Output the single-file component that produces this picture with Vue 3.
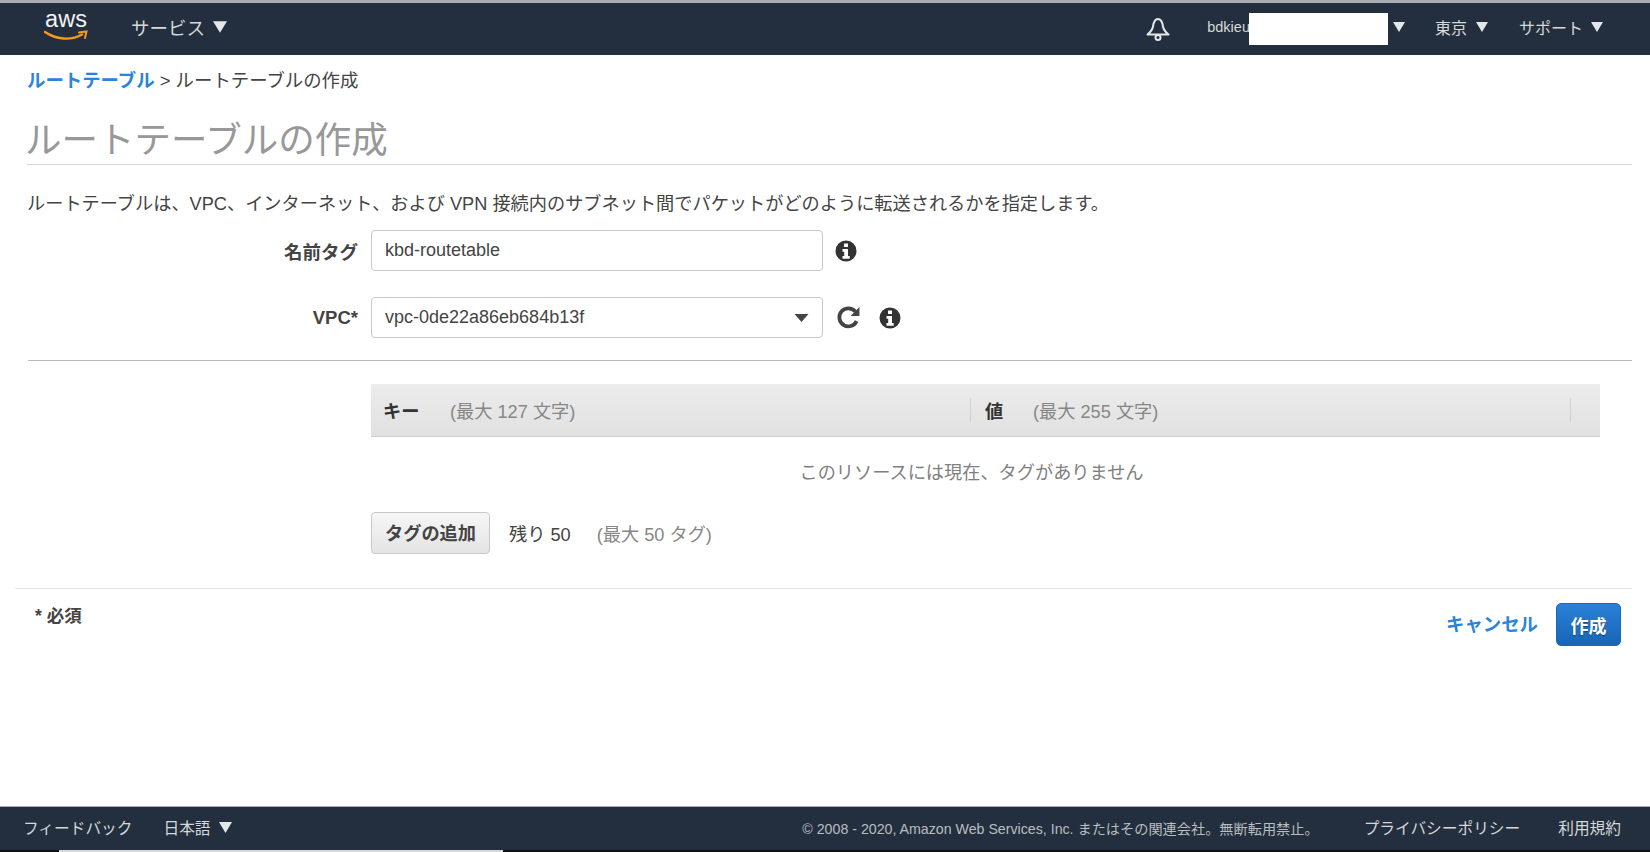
<script setup>
const caret = 'M0 0H12L6 10Z'
</script>

<template>
  <div class="page">
    <header class="topbar">
      <div class="brand">
        <svg class="logo" viewBox="0 0 46 30" width="46" height="30">
          <text x="22" y="13" text-anchor="middle" class="logo-text">aws</text>
          <path d="M1 18C12 25.500 27 27 38 20.500" fill="none" stroke="#f59a1c" stroke-width="2.400" stroke-linecap="round" />
          <path d="M35 18.500L42.500 17.500L41 24" fill="none" stroke="#f59a1c" stroke-width="2" stroke-linecap="round" />
        </svg>
      </div>
      <div class="nav-item services">サービス
        <svg class="caret" viewBox="0 0 12 10" width="14" height="12"><path :d="caret" /></svg>
      </div>
      <div class="spacer"></div>
      <svg class="bell" viewBox="0 0 24 24" width="24" height="24" fill="none" stroke="#e4e7e9" stroke-width="2" stroke-linejoin="round">
        <path d="M12 2C8.500 2 7.500 6 7 9.500C6.500 13 4.500 15 1.500 17.500H22.500C19.500 15 17.500 13 17 9.500C16.500 6 15.500 2 12 2Z" />
        <circle cx="12" cy="20.500" r="2.500" />
      </svg>
      <div class="nav-item account">
        <span class="user">bdkieu</span><span class="redact"></span>
        <svg class="caret" viewBox="0 0 12 10" width="12" height="10"><path :d="caret" /></svg>
      </div>
      <div class="nav-item region">東京
        <svg class="caret" viewBox="0 0 12 10" width="12" height="10"><path :d="caret" /></svg>
      </div>
      <div class="nav-item support">サポート
        <svg class="caret" viewBox="0 0 12 10" width="12" height="10"><path :d="caret" /></svg>
      </div>
    </header>

    <main class="main">
      <div class="content">
        <nav class="crumbs"><a class="crumb-link">ルートテーブル</a> &gt; ルートテーブルの作成</nav>
        <h1 class="title">ルートテーブルの作成</h1>
        <p class="desc">ルートテーブルは、VPC、インターネット、および VPN 接続内のサブネット間でパケットがどのように転送されるかを指定します。</p>

        <div class="form-row name-row">
          <label class="label">名前タグ</label>
          <div class="field">kbd-routetable</div>
          <svg class="info" viewBox="0 0 22 22" width="22" height="22">
            <path fill-rule="evenodd" d="M11 .5a10.500 10.500 0 1 0 0 21 10.500 10.500 0 0 0 0-21ZM9 3.500h4v3.500H9ZM7.500 9h5.500v7h1.700v2.800H7.500V16h1.700v-4.200H7.500Z" />
          </svg>
        </div>

        <div class="form-row vpc-row">
          <label class="label">VPC*</label>
          <div class="field select">
            <span>vpc-0de22a86eb684b13f</span>
            <svg viewBox="0 0 14 8" width="15" height="8"><path d="M0 0H14L7 8Z" fill="#444" /></svg>
          </div>
          <svg class="refresh" viewBox="0 0 24 24" width="25" height="25">
            <path fill="none" stroke="#444" stroke-width="3.600" d="M19.800 15.500A8.700 8.700 0 1 1 18.600 6.300" />
            <path fill="#444" d="M22.500 2V10.500H14Z" />
          </svg>
          <svg class="info vpc-info" viewBox="0 0 22 22" width="22" height="22">
            <path fill-rule="evenodd" d="M11 .5a10.500 10.500 0 1 0 0 21 10.500 10.500 0 0 0 0-21ZM9 3.500h4v3.500H9ZM7.500 9h5.500v7h1.700v2.800H7.500V16h1.700v-4.200H7.500Z" />
          </svg>
        </div>

        <hr class="divider" />

        <section class="tags">
          <div class="tag-head">
            <div class="col key-col"><b>キー</b><span class="hint">(最大 127 文字)</span></div>
            <div class="col val-col"><b>値</b><span class="hint">(最大 255 文字)</span></div>
            <div class="col end-col"></div>
          </div>
          <div class="empty">このリソースには現在、タグがありません</div>
          <div class="tag-actions">
            <button class="add-btn">タグの追加</button>
            <span class="remain">残り 50</span>
            <span class="hint max">(最大 50 タグ)</span>
          </div>
        </section>
      </div>

      <div class="form-foot">
        <div class="required">* 必須</div>
        <div class="actions">
          <a class="cancel">キャンセル</a>
          <button class="create">作成</button>
        </div>
      </div>
    </main>

    <footer class="footer">
      <div class="foot-bar">
        <span class="feedback">フィードバック</span>
        <span class="lang">日本語
          <svg class="caret" viewBox="0 0 12 10" width="13" height="11"><path :d="caret" /></svg>
        </span>
        <span class="spacer"></span>
        <span class="copy">© 2008 - 2020, Amazon Web Services, Inc. またはその関連会社。無断転用禁止。</span>
        <span class="policy">プライバシーポリシー</span>
        <span class="terms">利用規約</span>
      </div>
      <div class="scroll"><div class="thumb"></div></div>
    </footer>
  </div>
</template>

<style>
html, body { margin: 0; background: #fff; overflow: hidden; }
</style>

<style scoped>
.page {
  height: 852px;
  display: flex;
  flex-direction: column;
  font-family: "Liberation Sans", "Noto Sans CJK JP", sans-serif;
  color: #444;
  background: #fff;
}
.topbar {
  height: 52px;
  flex: none;
  border-top: 3px solid #a9acb0;
  background: #232f3e;
  display: flex;
  align-items: center;
  color: #d5d8da;
  box-sizing: content-box;
}
.brand { width: 131px; padding-left: 44px; box-sizing: border-box; display: flex; }
.logo-text { font: 23.500px "Liberation Sans", sans-serif; fill: #f2f3f3; }
.nav-item { display: flex; align-items: center; white-space: nowrap; padding-bottom: 4px; }
.services { font-size: 18.500px; gap: 8px; }
.caret { fill: #e4e7e9; flex: none; }
.spacer { flex: 1; }
.bell { margin-right: 37px; }
.account { font-size: 14.500px; }
.redact { width: 139px; height: 32px; background: #fff; margin-left: -1px; margin-top: 4px; }
.account .caret { margin-left: 5px; }
.region { font-size: 16px; gap: 9px; margin-left: 30px; }
.support { font-size: 16px; gap: 8px; margin-left: 31px; margin-right: 47px; }

.main { flex: 1; display: flex; flex-direction: column; }
.content { padding: 0 18px 0 27px; }
.crumbs { font-size: 18.400px; line-height: 26px; padding-top: 13px; white-space: nowrap; }
.crumb-link { color: #2b84dc; font-weight: 700; }
.title {
  margin: 23px 0 0;
  font-size: 36.500px;
  font-weight: 400;
  line-height: 48px;
  height: 47px;
  color: #989898;
  border-bottom: 1px solid #d5d5d5;
  text-indent: -2px;
}
.desc { margin: 26px 0 0; font-size: 18.200px; line-height: 26px; white-space: nowrap; }
.form-row { display: flex; align-items: center; }
.name-row { margin-top: 13px; }
.vpc-row { margin-top: 26px; }
.label { width: 331px; text-align: right; font-size: 18.500px; font-weight: 700; margin-right: 13px; }
.field {
  width: 452px;
  height: 41px;
  box-sizing: border-box;
  border: 1px solid #c9c9c9;
  border-radius: 4px;
  padding: 0 13px;
  display: flex;
  align-items: center;
  justify-content: space-between;
  font-size: 18px;
}
.info { fill: #333; margin-left: 12px; flex: none; }
.refresh { margin-left: 13px; flex: none; }
.vpc-info { margin-left: 18px; }
.divider { margin: 22px 0 0 1px; border: 0; border-top: 1px solid #b8b8b8; }
.tags { margin: 23px 0 0 344px; width: 1229px; }
.tag-head {
  height: 53px;
  box-sizing: border-box;
  background: linear-gradient(#ececec, #e1e1e1);
  border-bottom: 1px solid #cfcfcf;
  display: flex;
  align-items: center;
  font-size: 18.200px;
}
.col { height: 24px; display: flex; align-items: center; }
.col b { color: #333; flex: none; }
.key-col { width: 599px; padding-left: 12px; box-sizing: border-box; }
.key-col b { width: 67px; }
.val-col { width: 601px; padding-left: 14px; box-sizing: border-box; border-left: 1px solid #d0d0d0; border-right: 1px solid #d0d0d0; }
.val-col b { width: 48px; }
.hint { color: #878787; }
.empty { text-align: center; color: #808080; font-size: 18.200px; line-height: 26px; margin-top: 23px; padding-right: 28px; }
.tag-actions { display: flex; align-items: center; margin-top: 26px; font-size: 18.200px; }
.add-btn {
  width: 119px;
  height: 42px;
  border: 1px solid #c8c8c8;
  border-radius: 4px;
  background: linear-gradient(#f6f6f6, #e4e4e4);
  font: 700 18.200px "Liberation Sans", "Noto Sans CJK JP", sans-serif;
  color: #444;
  padding: 0 0 2px;
}
.remain { margin-left: 19px; }
.max { margin-left: 26px; }
.form-foot {
  margin: 34px 18px 0 15px;
  border-top: 1px solid #e4e4e4;
  display: flex;
  justify-content: space-between;
  padding: 14px 11px 0 20px;
}
.required { font-size: 17.500px; font-weight: 700; line-height: 26px; color: #444; }
.actions { display: flex; align-items: center; }
.cancel { color: #2b84dc; font-weight: 700; font-size: 18.400px; margin-right: 18px; margin-bottom: 3px; }
.create {
  width: 65px;
  height: 43px;
  border: 1px solid #1a68b8;
  border-radius: 5px;
  background: linear-gradient(#2b80d8, #1766b5);
  color: #fff;
  font: 700 18px "Liberation Sans", "Noto Sans CJK JP", sans-serif;
  text-shadow: 0 1px 1px rgba(0, 0, 0, .4);
  padding: 0;
}
.footer { flex: none; border-top: 1px solid #a9acb0; background: #232f3e; color: #d5d8da; }
.foot-bar { height: 43px; display: flex; align-items: center; white-space: nowrap; font-size: 15.700px; padding-bottom: 2px; box-sizing: border-box; }
.feedback { margin-left: 23px; }
.lang { margin-left: 31px; display: flex; align-items: center; gap: 8px; }
.copy { font-size: 14.200px; color: #b9bdc1; }
.policy { margin-left: 45px; }
.terms { margin-left: 38px; margin-right: 29px; }
.scroll { height: 2px; background: #111; }
.thumb { margin-left: 59px; width: 444px; height: 2px; background: #d8d8d8; }
</style>
